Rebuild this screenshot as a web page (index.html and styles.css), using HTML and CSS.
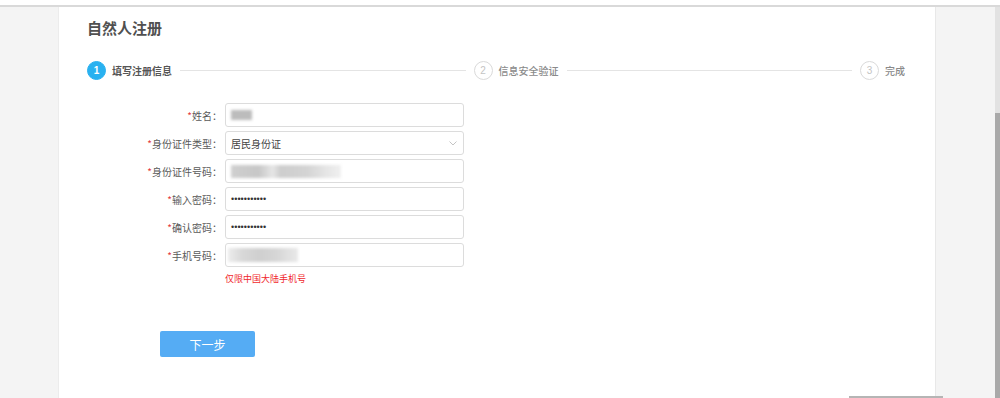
FILE: index.html
```html
<!DOCTYPE html>
<html lang="zh">
<head>
<meta charset="utf-8">
<title>自然人注册</title>
<link rel="stylesheet" href="styles.css">
</head>
<body>
<div class="topbar"></div>
<div class="main">
  <div class="gutter"></div>
  <div class="panel">
    <h1 class="title">自然人注册</h1>
    <div class="steps">
      <div class="step active"><span class="num">1</span><span class="label">填写注册信息</span></div>
      <div class="line"></div>
      <div class="step"><span class="num">2</span><span class="label">信息安全验证</span></div>
      <div class="line"></div>
      <div class="step"><span class="num">3</span><span class="label">完成</span></div>
    </div>
    <div class="form">
      <div class="row">
        <div class="lbl"><span class="req">*</span>姓名：</div>
        <div class="field"><span class="blur blur-name"></span></div>
      </div>
      <div class="row">
        <div class="lbl"><span class="req">*</span>身份证件类型：</div>
        <div class="field select"><span class="val">居民身份证</span>
          <svg class="chev" width="8" height="5" viewBox="0 0 8 5"><polyline points="0.5,0.5 4,4 7.5,0.5" fill="none" stroke="#bdbdbd" stroke-width="0.9"/></svg>
        </div>
      </div>
      <div class="row">
        <div class="lbl"><span class="req">*</span>身份证件号码：</div>
        <div class="field"><span class="blur blur-id"></span></div>
      </div>
      <div class="row">
        <div class="lbl"><span class="req">*</span>输入密码：</div>
        <div class="field"><span class="dots">•••••••••••</span></div>
      </div>
      <div class="row">
        <div class="lbl"><span class="req">*</span>确认密码：</div>
        <div class="field"><span class="dots">•••••••••••</span></div>
      </div>
      <div class="row">
        <div class="lbl"><span class="req">*</span>手机号码：</div>
        <div class="field"><span class="blur blur-phone"></span></div>
      </div>
      <div class="hint">仅限中国大陆手机号</div>
    </div>
    <button class="btn">下一步</button>
  </div>
  <div class="gutter gutter-right"></div>
  <div class="scrollbar"><div class="thumb"></div></div>
</div>
<div class="hthumb"></div>
</body>
</html>
```
FILE: styles.css
```css
html, body {
  margin: 0;
  padding: 0;
}
body {
  width: 1000px;
  height: 398px;
  overflow: hidden;
  position: relative;
  background: #f4f4f4;
  font-family: "Noto Sans CJK SC", "Noto Sans", sans-serif;
  color: #555;
}
.topbar {
  height: 5px;
  background: #ffffff;
  border-bottom: 2px solid #d9d9d9;
}
.main {
  display: flex;
  height: 391px;
}
.gutter {
  width: 58px;
  background: #f4f4f4;
}
.gutter-right {
  width: auto;
  flex: 1;
}
.panel {
  width: 878px;
  background: #fff;
  border-left: 1px solid #ececec;
  border-right: 1px solid #e8e8e8;
  padding: 10px 0 0 28px;
  box-sizing: border-box;
  display: flex;
  flex-direction: column;
  align-items: flex-start;
}
.title {
  margin: 0;
  font-size: 15px;
  line-height: 22px;
  font-weight: 700;
  color: #505050;
}
.steps {
  margin-top: 22px;
  width: 818px;
  display: flex;
  align-items: center;
  gap: 8px;
}
.step {
  display: flex;
  align-items: center;
  gap: 6px;
}
.num {
  width: 17px;
  height: 17px;
  border-radius: 50%;
  border: 1px solid #dadada;
  color: #c4c4c4;
  font-family: "Liberation Sans", sans-serif;
  font-size: 10px;
  display: flex;
  align-items: center;
  justify-content: center;
}
.step .label {
  font-size: 10px;
  color: #8a8a8a;
  font-weight: 500;
}
.step.active .num {
  background: #29b1f0;
  border-color: #29b1f0;
  color: #fff;
  font-weight: 700;
}
.step.active .label {
  color: #555;
  font-weight: 700;
}
.line {
  flex: 1;
  height: 1px;
  background: #e4e4e4;
}
.form {
  margin-top: 23px;
  display: flex;
  flex-direction: column;
  gap: 4px;
}
.row {
  display: flex;
  align-items: center;
  gap: 3px;
}
.lbl {
  width: 135px;
  text-align: right;
  font-size: 10px;
  color: #5a5a5a;
  white-space: nowrap;
}
.req {
  color: #e4393c;
}
.field {
  width: 239px;
  height: 24px;
  box-sizing: border-box;
  border: 1px solid #dcdcdc;
  border-radius: 3px;
  background: #fff;
  display: flex;
  align-items: center;
  padding-left: 5px;
  position: relative;
}
.select {
  justify-content: space-between;
  padding-right: 6px;
}
.val {
  font-size: 10px;
  color: #444;
}
.chev {
  display: block;
}
.dots {
  font-family: "Liberation Sans", sans-serif;
  font-size: 9px;
  color: #333;
  letter-spacing: 0.05px;
}
.blur {
  display: block;
  filter: blur(1.5px);
}
.blur-name {
  width: 21px;
  height: 10px;
  background: #bcbcbc;
}
.blur-id {
  width: 110px;
  height: 13px;
  background: linear-gradient(90deg, #cfcfcf 0%, #c7c7c7 25%, #e6e6e6 38%, #cdcdcd 45%, #d4d4d4 70%, #e4e4e4 85%, #f0f0f0 100%);
}
.blur-phone {
  width: 70px;
  height: 14px;
  margin-left: -3px;
  background: linear-gradient(90deg, #ececec 0%, #d8d8d8 20%, #cfcfcf 45%, #d6d6d6 70%, #e9e9e9 100%);
}
.hint {
  margin: 1px 0 0 138px;
  font-size: 9px;
  color: #f0282d;
}
.btn {
  margin: 46px 0 0 73px;
  width: 95px;
  height: 26px;
  border: none;
  border-radius: 2px;
  background: #55acf4;
  color: #fff;
  font-family: "Noto Sans CJK SC", sans-serif;
  font-size: 12px;
  padding: 0;
}
.scrollbar {
  width: 5px;
  background: #e2e2e2;
  display: flex;
  flex-direction: column;
}
.thumb {
  margin-top: 106px;
  flex: 1;
  background: #a9a9a9;
}
.hthumb {
  position: absolute;
  left: 849px;
  bottom: 0;
  width: 94px;
  height: 2px;
  background: #b5b5b5;
}
```
